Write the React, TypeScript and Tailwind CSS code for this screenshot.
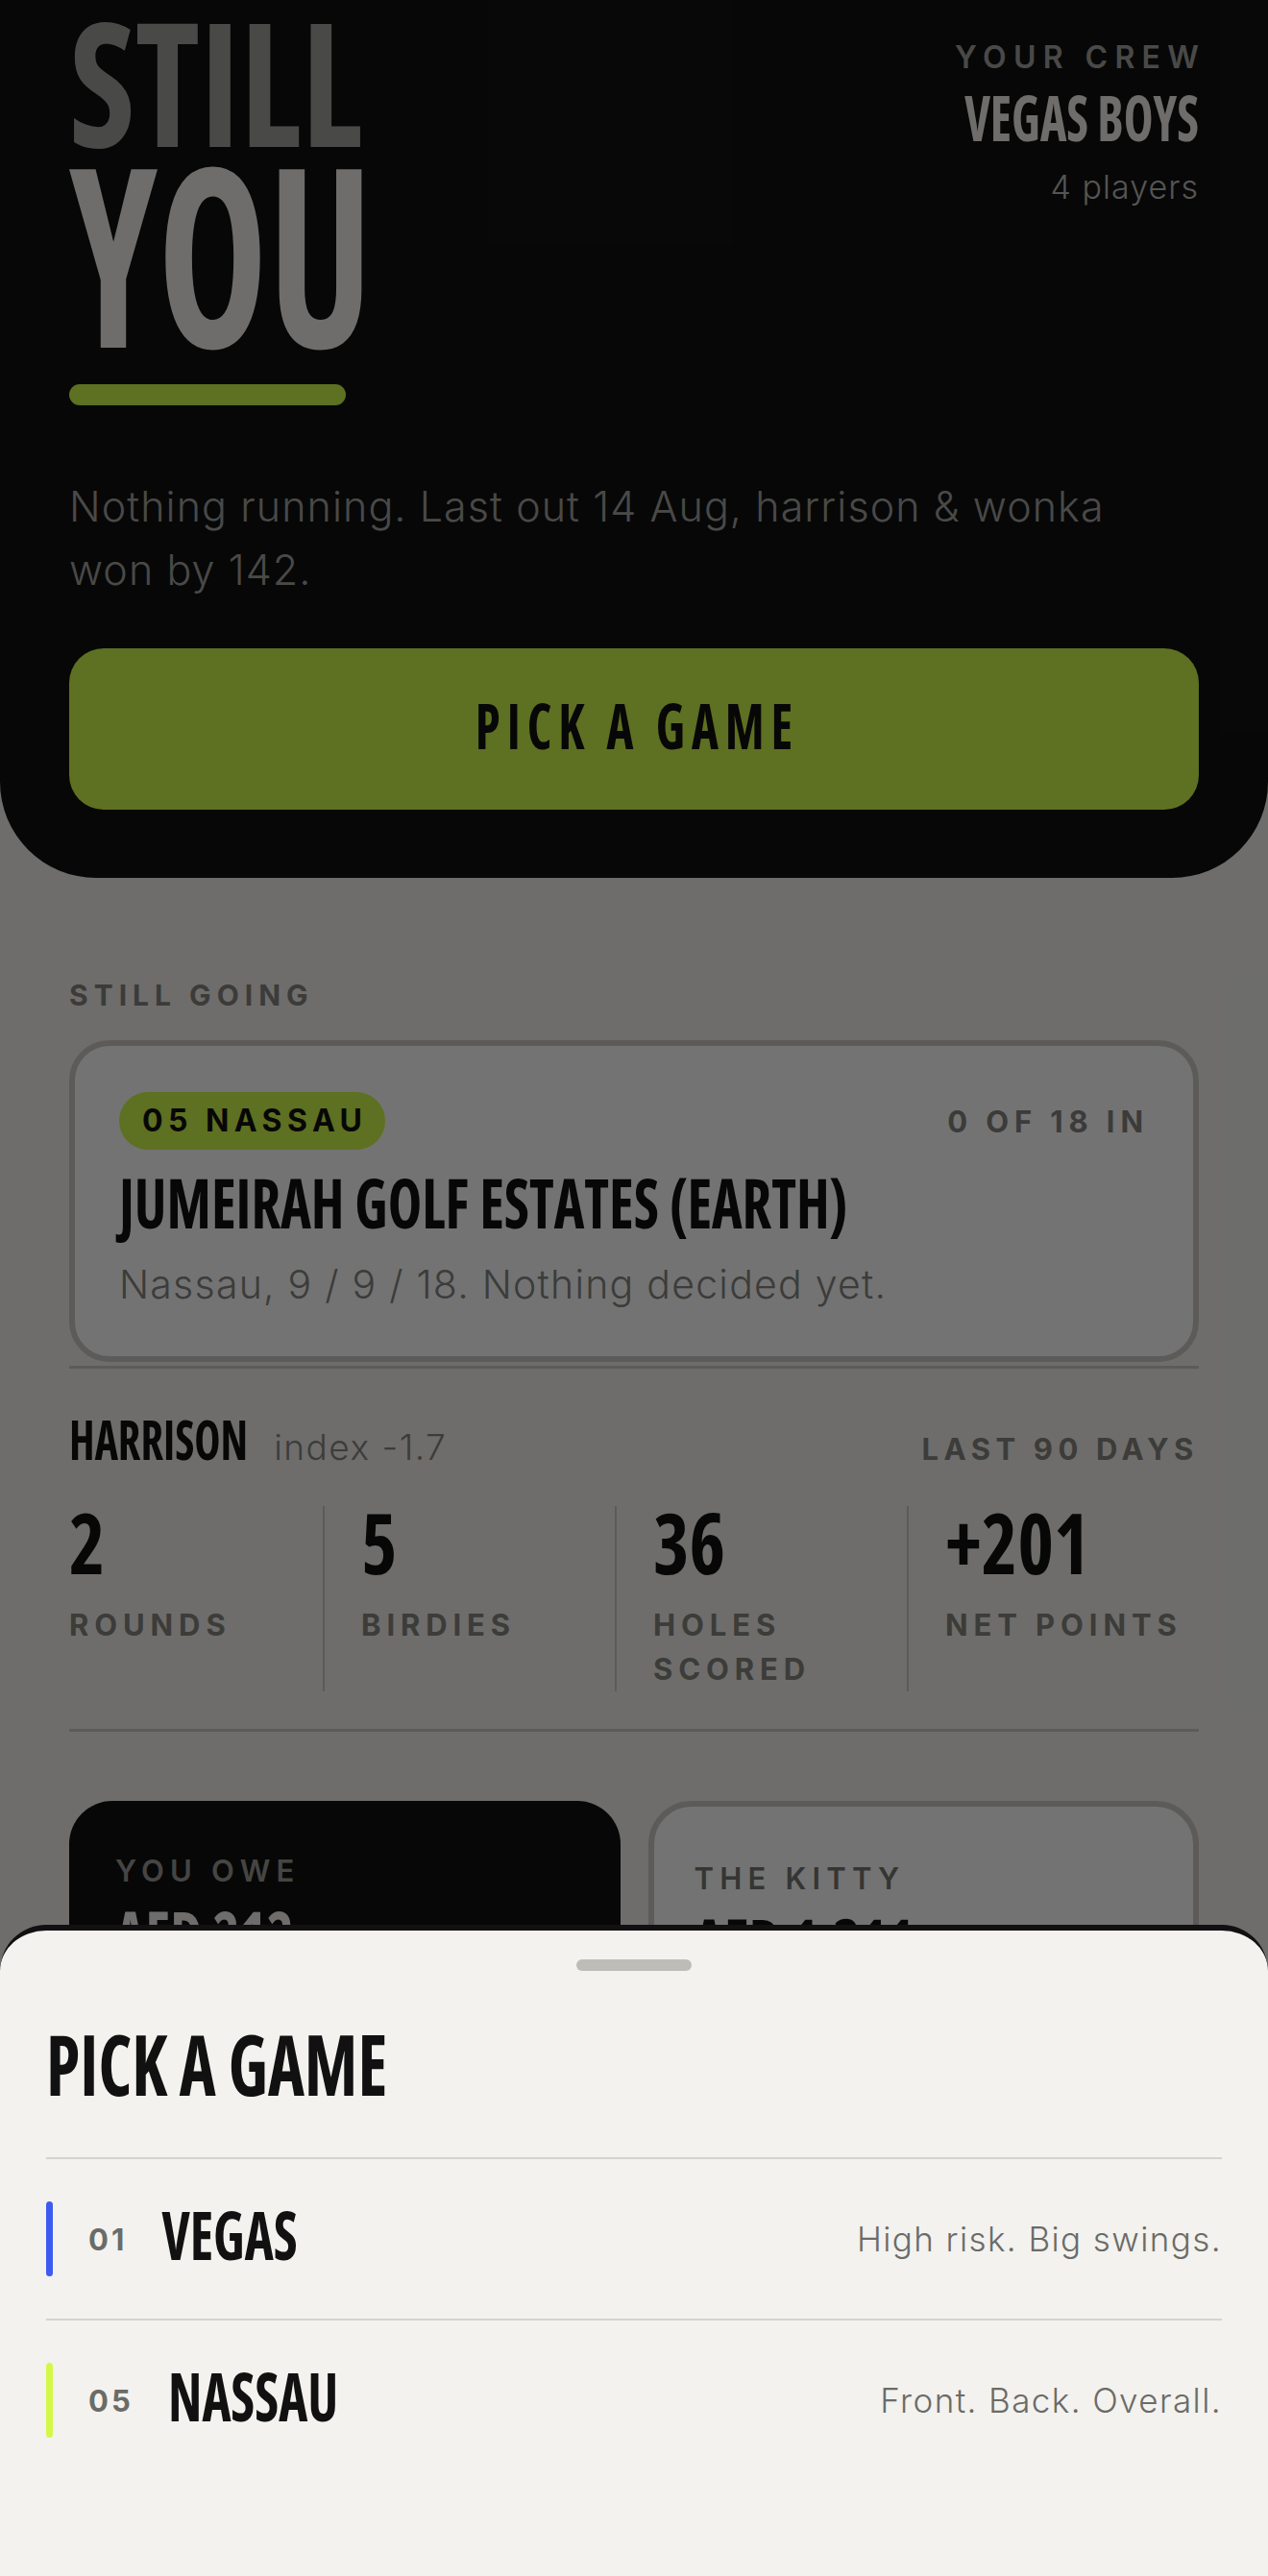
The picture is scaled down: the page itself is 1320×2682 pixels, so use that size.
const disp =
  "inline-block font-['Open_Sans',sans-serif] font-bold [font-stretch:75%] leading-none origin-[50%_88.8%]";

const stats = [
  { value: '2', label: 'ROUNDS' },
  { value: '5', label: 'BIRDIES' },
  { value: '36', label: 'HOLES SCORED' },
  { value: '+201', label: 'NET POINTS' },
];

const games = [
  { num: '01', name: 'VEGAS', desc: 'High risk. Big swings.', bar: 'bg-[#3d5af1]' },
  { num: '05', name: 'NASSAU', desc: 'Front. Back. Overall.', bar: 'bg-[#d4f84a]' },
];

export default function App() {
  return (
    <div className="relative w-[1320px] h-[2682px] overflow-hidden bg-[#f3f2ee] font-['Inter',sans-serif] text-[#111]">
      {/* hero */}
      <section className="bg-[#111] rounded-b-[100px] px-[72px] pt-[14px] pb-[71px]">
        <div className="flex justify-between">
          <div className="flex flex-col">
            <span className={disp + ' text-[157px] scale-y-[1.14] text-[#a3a3a0]'}>STILL</span>
            <span className={disp + ' mt-[19px] text-[194px] scale-y-[1.34] text-[#f3f2ee]'}>YOU</span>
            <div className="mt-[16px] w-[288px] h-[22px] rounded-full bg-[#d1f949]" />
          </div>
          <div className="flex flex-col items-end">
            <span className="mt-[30px] mr-[-0.23em] text-[32px] leading-none font-semibold tracking-[0.23em] text-[#a3a3a0]">
              YOUR CREW
            </span>
            <span className={disp + ' mt-[25px] text-[52px] scale-y-[1.27] text-[#f3f2ee]'}>VEGAS BOYS</span>
            <span className="mt-[25px] text-[34px] leading-none font-light tracking-[0.03em] text-[#bdbdb8]">4 players</span>
          </div>
        </div>
        <p className="mt-[72px] max-w-[1110px] text-[43px] leading-[66px] font-light tracking-[0.025em] text-[#a3a3a0]">
          Nothing running. Last out 14 Aug, harrison &amp; wonka won by 142.
        </p>
        <button className="mt-[49px] w-full h-[168px] rounded-[36px] bg-[#d1f949] flex items-center justify-center">
          <span className={disp + ' text-[53px] tracking-[0.13em] mr-[-0.13em] scale-y-[1.26] text-[#111]'}>PICK A GAME</span>
        </button>
      </section>

      {/* body */}
      <main className="px-[72px]">
        <div className="mt-[107px] text-[30px] leading-none font-bold tracking-[0.2em] text-[#85847f]">STILL GOING</div>

        <div className="mt-[32px] rounded-[42px] border-[6px] border-[#cccbc6] bg-white pl-[46px] pr-[46px] pt-[48px] pb-[54px]">
          <div className="flex items-center justify-between">
            <span className="h-[60px] flex items-center rounded-full bg-[#d1f949] pl-[24px] pr-[19px] text-[32px] leading-none font-bold tracking-[0.17em] text-[#111]">
              05 NASSAU
            </span>
            <span className="text-[31px] leading-none font-bold tracking-[0.19em] text-[#848480]">0 OF 18 IN</span>
          </div>
          <div className="mt-[29px]">
            <span className={disp + ' text-[60px] scale-y-[1.19] text-[#111]'}>JUMEIRAH GOLF ESTATES (EARTH)</span>
          </div>
          <div className="mt-[31px] text-[41px] leading-none font-light tracking-[0.03em] text-[#858580]">
            Nassau, 9 / 9 / 18. Nothing decided yet.
          </div>
        </div>

        <section className="mt-[4px] border-y-[3px] border-[#cac9c4] pt-[54px] pb-[39px]">
          <div className="flex items-baseline">
            <span className={disp + ' text-[46px] scale-y-[1.25] text-[#111]'}>HARRISON</span>
            <span className="ml-[27px] text-[37px] leading-none font-light tracking-[0.04em] text-[#868682]">index -1.7</span>
            <span className="ml-auto text-[31px] leading-none font-bold tracking-[0.18em] text-[#86857f]">
              LAST 90 DAYS
            </span>
          </div>
          <div className="mt-[43px] flex">
            {stats.map((s, i) => (
              <div key={s.label} className={i === 0 ? 'flex-1 flex flex-col' : 'flex-1 flex flex-col border-l-2 border-[#cac9c4] pl-[38px]'}>
                <span className={disp + ' self-start text-[80px] scale-y-[1.1] text-[#111]'}>{s.value}</span>
                <span className="mt-[21px] text-[31px] leading-[46px] font-bold tracking-[0.19em] text-[#86857f]">{s.label}</span>
              </div>
            ))}
          </div>
        </section>

        <div className="mt-[72px] grid grid-cols-2 gap-[29px]">
          <div className="h-[420px] rounded-[45px] bg-[#111] px-[48px] pt-[57px]">
            <div className="text-[31px] leading-none font-semibold tracking-[0.2em] text-[#9a9a95]">YOU OWE</div>
            <div className="mt-[26px]">
              <span className={disp + ' text-[60px] scale-y-[1.2] text-[#f3f2ee]'}>AED 212</span>
            </div>
            <div className="mt-[24px] text-[30px] font-light text-[#9a9a95]">to harrison</div>
          </div>
          <div className="h-[420px] rounded-[45px] border-[6px] border-[#cccbc6] bg-white px-[42px] pt-[59px]">
            <div className="text-[31px] leading-none font-semibold tracking-[0.2em] text-[#767672]">THE KITTY</div>
            <div className="mt-[26px]">
              <span className={disp + ' text-[60px] scale-y-[1.2] text-[#111]'}>AED 1,311</span>
            </div>
            <div className="mt-[24px] text-[30px] font-light text-[#767672]">across 4 players</div>
          </div>
        </div>
      </main>

      {/* dim overlay */}
      <div className="absolute inset-0 z-10 bg-black/55" />

      {/* bottom sheet */}
      <div className="absolute inset-x-0 bottom-0 z-20 h-[678px] rounded-t-[48px] border-t-[6px] border-[#111] bg-[#f3f2ee] px-[48px]">
        <div className="mx-auto mt-[30px] w-[120px] h-[12px] rounded-full bg-[#bdbcb7]" />
        <div className="mt-[66px]">
          <span className={disp + ' text-[72px] scale-y-[1.22] text-[#111]'}>PICK A GAME</span>
        </div>
        <div className="mt-[56px] flex flex-col">
          {games.map((g) => (
            <div key={g.num} className="h-[168px] border-t-2 border-[#d4d3ce] flex items-center">
              <div className={'w-[7px] h-[78px] rounded-full ' + g.bar} />
              <span className="ml-[37px] text-[31px] leading-none font-bold tracking-[0.1em] text-[#6b6b68]">{g.num}</span>
              <span className={disp + ' ml-[36px] text-[57px] scale-y-[1.22] text-[#111]'}>{g.name}</span>
              <span className="ml-auto text-[35px] leading-none font-light tracking-[0.04em] text-[#6b6b68]">{g.desc}</span>
            </div>
          ))}
        </div>
      </div>
    </div>
  );
}
